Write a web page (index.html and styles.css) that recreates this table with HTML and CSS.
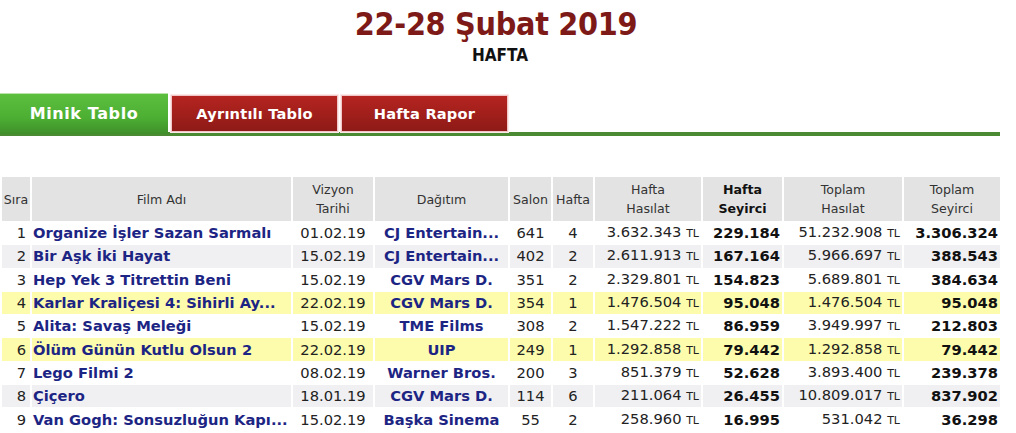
FILE: index.html
```html
<!DOCTYPE html>
<html lang="tr">
<head>
<meta charset="utf-8">
<title>22-28 Şubat 2019</title>
<link rel="stylesheet" href="styles.css">
</head>
<body>
<div class="page">
  <header class="head">
    <h1 class="title">22-28 Şubat 2019</h1>
    <div class="subtitle">HAFTA</div>
  </header>
  <nav class="tabs">
    <a class="tab tab-active">Minik Tablo</a>
    <a class="tab tab-red">Ayrıntılı Tablo</a>
    <a class="tab tab-red">Hafta Rapor</a>
  </nav>
  <table class="box">
    <colgroup>
      <col class="c-sira"><col class="c-film"><col class="c-date"><col class="c-dist"><col class="c-salon"><col class="c-hafta"><col class="c-hh"><col class="c-hs"><col class="c-th"><col class="c-ts">
    </colgroup>
    <thead>
      <tr>
        <th>Sıra</th><th>Film Adı</th><th>Vizyon<br>Tarihi</th><th>Dağıtım</th><th>Salon</th><th>Hafta</th><th>Hafta<br>Hasılat</th><th class="b">Hafta<br>Seyirci</th><th>Toplam<br>Hasılat</th><th>Toplam<br>Seyirci</th>
      </tr>
    </thead>
    <tbody>
      <tr class="odd"><td class="n">1</td><td class="film">Organize İşler Sazan Sarmalı</td><td class="ctr">01.02.19</td><td class="dist">CJ Entertain...</td><td class="ctr">641</td><td class="ctr">4</td><td class="r">3.632.343 <span class="tl">TL</span></td><td class="r b">229.184</td><td class="r">51.232.908 <span class="tl">TL</span></td><td class="r b">3.306.324</td></tr>
      <tr class="even"><td class="n">2</td><td class="film">Bir Aşk İki Hayat</td><td class="ctr">15.02.19</td><td class="dist">CJ Entertain...</td><td class="ctr">402</td><td class="ctr">2</td><td class="r">2.611.913 <span class="tl">TL</span></td><td class="r b">167.164</td><td class="r">5.966.697 <span class="tl">TL</span></td><td class="r b">388.543</td></tr>
      <tr class="odd"><td class="n">3</td><td class="film">Hep Yek 3 Titrettin Beni</td><td class="ctr">15.02.19</td><td class="dist">CGV Mars D.</td><td class="ctr">351</td><td class="ctr">2</td><td class="r">2.329.801 <span class="tl">TL</span></td><td class="r b">154.823</td><td class="r">5.689.801 <span class="tl">TL</span></td><td class="r b">384.634</td></tr>
      <tr class="new"><td class="n">4</td><td class="film">Karlar Kraliçesi 4: Sihirli Ay...</td><td class="ctr">22.02.19</td><td class="dist">CGV Mars D.</td><td class="ctr">354</td><td class="ctr">1</td><td class="r">1.476.504 <span class="tl">TL</span></td><td class="r b">95.048</td><td class="r">1.476.504 <span class="tl">TL</span></td><td class="r b">95.048</td></tr>
      <tr class="odd"><td class="n">5</td><td class="film">Alita: Savaş Meleği</td><td class="ctr">15.02.19</td><td class="dist">TME Films</td><td class="ctr">308</td><td class="ctr">2</td><td class="r">1.547.222 <span class="tl">TL</span></td><td class="r b">86.959</td><td class="r">3.949.997 <span class="tl">TL</span></td><td class="r b">212.803</td></tr>
      <tr class="new"><td class="n">6</td><td class="film">Ölüm Günün Kutlu Olsun 2</td><td class="ctr">22.02.19</td><td class="dist">UIP</td><td class="ctr">249</td><td class="ctr">1</td><td class="r">1.292.858 <span class="tl">TL</span></td><td class="r b">79.442</td><td class="r">1.292.858 <span class="tl">TL</span></td><td class="r b">79.442</td></tr>
      <tr class="odd"><td class="n">7</td><td class="film">Lego Filmi 2</td><td class="ctr">08.02.19</td><td class="dist">Warner Bros.</td><td class="ctr">200</td><td class="ctr">3</td><td class="r">851.379 <span class="tl">TL</span></td><td class="r b">52.628</td><td class="r">3.893.400 <span class="tl">TL</span></td><td class="r b">239.378</td></tr>
      <tr class="even"><td class="n">8</td><td class="film">Çiçero</td><td class="ctr">18.01.19</td><td class="dist">CGV Mars D.</td><td class="ctr">114</td><td class="ctr">6</td><td class="r">211.064 <span class="tl">TL</span></td><td class="r b">26.455</td><td class="r">10.809.017 <span class="tl">TL</span></td><td class="r b">837.902</td></tr>
      <tr class="odd"><td class="n">9</td><td class="film">Van Gogh: Sonsuzluğun Kapı...</td><td class="ctr">15.02.19</td><td class="dist">Başka Sinema</td><td class="ctr">55</td><td class="ctr">2</td><td class="r">258.960 <span class="tl">TL</span></td><td class="r b">16.995</td><td class="r">531.042 <span class="tl">TL</span></td><td class="r b">36.298</td></tr>
    </tbody>
  </table>
</div>
</body>
</html>
```

FILE: styles.css
```css
html, body {
  margin: 0;
  padding: 0;
  background: #ffffff;
}
body {
  font-family: "DejaVu Sans", Verdana, sans-serif;
  color: #222;
}
.page {
  width: 1000px;
}
.head {
  text-align: center;
  padding-top: 7px;
}
.title {
  margin: 0 8px 0 0;
  font-family: "DejaVu Sans Condensed", "DejaVu Sans", sans-serif;
  font-weight: bold;
  font-size: 32px;
  line-height: 34px;
  color: #7d1a17;
  letter-spacing: -0.3px;
}
.subtitle {
  font-family: "DejaVu Sans Condensed", "DejaVu Sans", sans-serif;
  font-weight: bold;
  font-size: 17px;
  line-height: 20px;
  margin-top: 4px;
  color: #111;
}
.tabs {
  display: flex;
  align-items: flex-end;
  margin-top: 27px;
  border-bottom: 4px solid #4a8a33;
  height: 40px;
}
.tab {
  display: flex;
  align-items: center;
  justify-content: center;
  color: #fff;
  font-weight: bold;
  text-decoration: none;
  box-sizing: border-box;
}
.tab-active {
  width: 168px;
  height: 41px;
  font-size: 16px;
  letter-spacing: 0.6px;
  background: linear-gradient(#5cbf3e, #4caf33 60%, #3f8f2b);
  border-top: 1px solid #b9e3a8;
  margin-bottom: -2px;
  padding-bottom: 2px;
}
.tab-red {
  width: 167px;
  height: 37px;
  font-size: 14.6px;
  letter-spacing: 0.2px;
  margin-left: 3px;
  background: linear-gradient(#b52420, #8e1a17);
  border: 1px solid #f0c6c6;
  box-shadow: 0 0 0 1px #fbe9e9;
}
.box {
  margin-top: 40px;
  border-collapse: separate;
  border-spacing: 2px 1px;
  table-layout: fixed;
  width: 1000px;
}
.c-sira { width: 28px; }
.c-film { width: 259px; }
.c-date { width: 80px; }
.c-dist { width: 133px; }
.c-salon { width: 41px; }
.c-hafta { width: 40px; }
.c-hh { width: 106px; }
.c-hs { width: 79px; }
.c-th { width: 118px; }
.c-ts { width: 96px; }
th {
  background: #e3e3e3;
  font-weight: normal;
  font-size: 12.6px;
  line-height: 19px;
  color: #333;
  height: 44px;
  padding: 0 1px;
  text-align: center;
  white-space: nowrap;
}
th.b {
  font-weight: bold;
  color: #111;
}
td {
  font-size: 14.7px;
  height: 22.3px;
  padding: 0 2px;
  white-space: nowrap;
  overflow: hidden;
  color: #222;
  line-height: 18px;
}
tr.odd td { background: #ffffff; }
tr.even td { background: #f0f0f2; }
tr.new td { background: #fcfcac; }
td.n {
  text-align: right;
  padding-right: 4px;
}
td.film {
  font-weight: bold;
  color: #1d2584;
  padding-left: 1px;
  padding-right: 0;
}
td.dist {
  font-weight: bold;
  color: #1d2584;
  text-align: center;
}
td.ctr { text-align: center; }
td.r {
  text-align: right;
  padding-right: 2px;
}
td.b {
  font-weight: bold;
  color: #111;
}
.tl {
  font-size: 11px;
}
```
